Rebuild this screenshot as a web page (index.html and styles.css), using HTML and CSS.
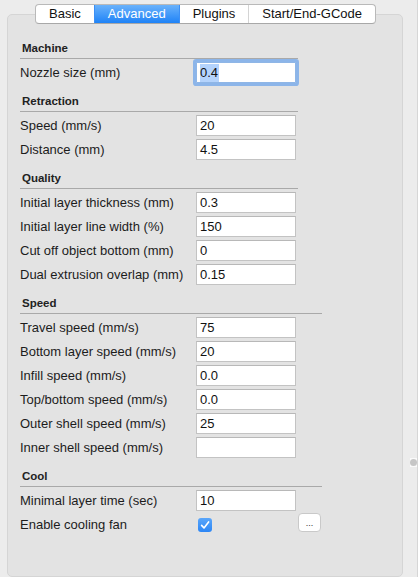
FILE: index.html
```html
<!DOCTYPE html>
<html>
<head>
<meta charset="utf-8">
<link rel="stylesheet" href="styles.css">
</head>
<body>
<div class="window">
  <div class="main">
    <div class="tabs">
      <div class="tab">Basic</div>
      <div class="tab tab--active">Advanced</div>
      <div class="tab">Plugins</div>
      <div class="tab">Start/End-GCode</div>
    </div>
    <div class="panel">
      <section class="section">
        <h3 class="section-title">Machine</h3>
        <div class="rows">
          <div class="row"><span class="label">Nozzle size (mm)</span><div class="field field--focus"><span class="sel">0.4</span></div></div>
        </div>
      </section>
      <section class="section">
        <h3 class="section-title">Retraction</h3>
        <div class="rows">
          <div class="row"><span class="label">Speed (mm/s)</span><div class="field">20</div></div>
          <div class="row"><span class="label">Distance (mm)</span><div class="field">4.5</div></div>
        </div>
      </section>
      <section class="section">
        <h3 class="section-title">Quality</h3>
        <div class="rows">
          <div class="row"><span class="label">Initial layer thickness (mm)</span><div class="field">0.3</div></div>
          <div class="row"><span class="label">Initial layer line width (%)</span><div class="field">150</div></div>
          <div class="row"><span class="label">Cut off object bottom (mm)</span><div class="field">0</div></div>
          <div class="row"><span class="label">Dual extrusion overlap (mm)</span><div class="field">0.15</div></div>
        </div>
      </section>
      <section class="section">
        <h3 class="section-title section-title--wide">Speed</h3>
        <div class="rows">
          <div class="row"><span class="label">Travel speed (mm/s)</span><div class="field">75</div></div>
          <div class="row"><span class="label">Bottom layer speed (mm/s)</span><div class="field">20</div></div>
          <div class="row"><span class="label">Infill speed (mm/s)</span><div class="field">0.0</div></div>
          <div class="row"><span class="label">Top/bottom speed (mm/s)</span><div class="field">0.0</div></div>
          <div class="row"><span class="label">Outer shell speed (mm/s)</span><div class="field">25</div></div>
          <div class="row"><span class="label">Inner shell speed (mm/s)</span><div class="field"></div></div>
        </div>
      </section>
      <section class="section">
        <h3 class="section-title section-title--wide">Cool</h3>
        <div class="rows">
          <div class="row"><span class="label">Minimal layer time (sec)</span><div class="field">10</div></div>
          <div class="row">
            <span class="label">Enable cooling fan</span>
            <div class="check-cell">
              <svg class="checkbox" width="14" height="14" viewBox="0 0 14 14">
                <defs>
                  <linearGradient id="cb" x1="0" y1="0" x2="0" y2="1">
                    <stop offset="0" stop-color="#5aa6fa"/>
                    <stop offset="1" stop-color="#2c86f5"/>
                  </linearGradient>
                </defs>
                <rect x="0" y="0" width="14" height="14" rx="3" fill="url(#cb)"/>
                <path d="M3.6 7.4 L6 9.9 L10.6 3.9" fill="none" stroke="#fff" stroke-width="1.6" stroke-linecap="round" stroke-linejoin="round"/>
              </svg>
            </div>
            <div class="more-btn">...</div>
          </div>
        </div>
      </section>
    </div>
  </div>
  <div class="gutter">
    <div class="knob"><span class="knob-dot"></span></div>
  </div>
</div>
</body>
</html>
```
FILE: styles.css
```css
html, body {
  margin: 0;
  padding: 0;
}
body {
  background: #ececec;
  font-family: "Liberation Sans", Helvetica, Arial, sans-serif;
  color: #1c1c1c;
  font-size: 13px;
}
.window {
  display: flex;
  height: 577px;
  overflow: hidden;
}
.main {
  width: 396px;
  padding: 4px 0 0 7px;
  display: flex;
  flex-direction: column;
}
.tabs {
  align-self: center;
  display: flex;
  height: 20px;
  box-sizing: border-box;
  border: 1px solid #b9b9b9;
  border-bottom-color: #a8a8a8;
  border-radius: 4px;
  background: #fff;
  overflow: hidden;
  position: relative;
  z-index: 1;
  margin-bottom: -10px;
  margin-left: 1px;
}
.tab {
  padding: 0 13px;
  line-height: 18px;
  font-size: 13px;
  color: #111;
  border-left: 1px solid #d4d4d4;
}
.tab:first-child {
  border-left: none;
}
.tab--active {
  background: linear-gradient(#6ab2fb, #1f83f7);
  color: #fff;
  border-left-color: #3b8ff5;
}
.tab--active + .tab {
  border-left-color: #3b8ff5;
}
.panel {
  flex: 1;
  background: #e3e3e3;
  border: 1px solid #d5d5d5;
  border-radius: 5px;
  padding: 26px 0 0 12px;
  display: flex;
  flex-direction: column;
  gap: 8px;
}
.section-title {
  margin: 0;
  width: 278px;
  box-sizing: border-box;
  padding: 0 0 3px 2px;
  font-size: 11.5px;
  font-weight: bold;
  line-height: 14px;
  color: #222;
  border-bottom: 1px solid #a9a9a9;
}
.section-title--wide {
  width: 302px;
}
.rows {
  padding: 3px 0;
  display: flex;
  flex-direction: column;
  gap: 3px;
}
.row {
  display: grid;
  grid-template-columns: 174px 100px auto;
  column-gap: 2px;
  align-items: center;
  height: 21px;
}
.label {
  white-space: nowrap;
  line-height: 16px;
}
.field {
  box-sizing: border-box;
  height: 21px;
  background: #fff;
  border: 1px solid #c3c3c3;
  border-top-color: #b8b8b8;
  padding: 0 3px;
  line-height: 19px;
  font-size: 13px;
  color: #111;
}
.field--focus {
  border-color: #8fb6e6;
  border-radius: 1px;
  box-shadow: 0 0 0 3px #8cb5e9;
}
.sel {
  display: inline-block;
  background: #b4d3fc;
  line-height: 18px;
  padding-right: 1px;
}
.check-cell {
  display: flex;
  align-items: center;
  padding-left: 2px;
}
.checkbox {
  display: block;
}
.more-btn {
  align-self: start;
  margin-top: -1px;
  width: 23px;
  height: 19px;
  box-sizing: border-box;
  background: #fff;
  border: 1px solid #c9c9c9;
  border-radius: 4px;
  font-size: 9px;
  line-height: 19px;
  text-align: center;
  color: #333;
}
.gutter {
  flex: 1;
  display: flex;
  flex-direction: column;
  align-items: flex-end;
  padding-top: 458px;
  border-right: 1px solid #d6d6d6;
}
.knob {
  width: 7px;
  height: 9px;
  background: #fafafa;
  display: flex;
  align-items: center;
  justify-content: flex-start;
}
.knob-dot {
  width: 7px;
  height: 7px;
  border-radius: 50%;
  background: #c6c6c6;
}
```
